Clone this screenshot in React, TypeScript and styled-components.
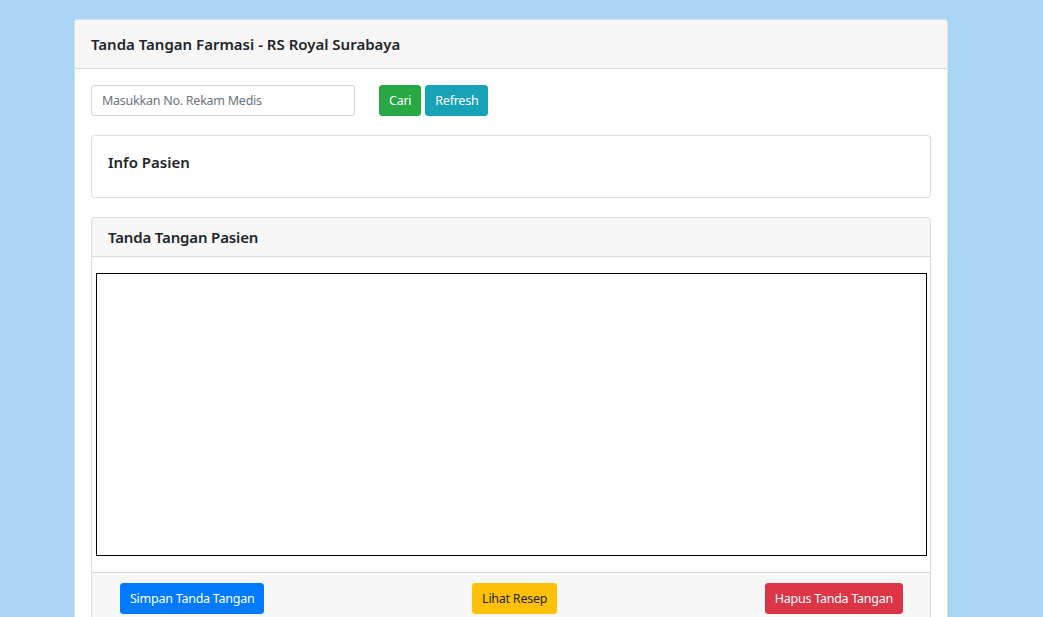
import React from "react";
import styled, { createGlobalStyle } from "styled-components";

const Global = createGlobalStyle`
  html, body { margin: 0; padding: 0; }
  body {
    background: #a8d5f3;
    font-family: "Noto Sans", "Open Sans", sans-serif;
    color: #212529;
  }
  * { box-sizing: border-box; }
`;

const Page = styled.div`
  padding: 19px 0 0 74px;
  min-height: 617px;
`;

const Card = styled.div<{ $mb?: number }>`
  background: #fff;
  border: 1px solid rgba(0, 0, 0, 0.125);
  border-radius: 4px;
  margin-bottom: ${(p) => p.$mb ?? 0}px;
  overflow: hidden;
`;

const MainCard = styled(Card)`
  width: 874px;
  border-bottom: none;
  border-bottom-left-radius: 0;
  border-bottom-right-radius: 0;
`;

const CardHeader = styled.div<{ $py: number }>`
  background: #f7f7f7;
  border-bottom: 1px solid rgba(0, 0, 0, 0.125);
  padding: ${(p) => p.$py}px 16px;
`;

const Title = styled.h5<{ $size: number; $ls?: number }>`
  margin: 0;
  font-size: ${(p) => p.$size}px;
  letter-spacing: ${(p) => p.$ls ?? 0}px;
  line-height: 24px;
  font-weight: 600;
`;

const CardBody = styled.div`
  padding: 16px;
`;

const SearchRow = styled.div`
  display: flex;
  align-items: center;
  gap: 4px;
  margin-bottom: 19px;
`;

const Input = styled.input`
  width: 264px;
  height: 31px;
  padding: 4px 10px;
  font-family: inherit;
  font-size: 12.5px;
  letter-spacing: -0.25px;
  color: #495057;
  border: 1px solid #ced4da;
  border-radius: 3px;
  margin-right: 20px;
  &::placeholder { color: #6c757d; }
`;

const Btn = styled.button<{ $bg: string; $fg?: string }>`
  height: 31px;
  padding: 0 9px;
  font-family: inherit;
  font-size: 12.5px;
  letter-spacing: -0.25px;
  line-height: 29px;
  color: ${(p) => p.$fg ?? "#fff"};
  background: ${(p) => p.$bg};
  border: 1px solid ${(p) => p.$bg};
  border-radius: 3px;
  cursor: pointer;
`;

const InfoBody = styled.div`
  padding: 16px 16px 25px;
`;

const InfoTitle = styled.h5`
  margin: 0;
  font-size: 15px;
  line-height: 20px;
  font-weight: 600;
`;

const CanvasBody = styled.div`
  padding: 16px 3px 16px 4px;
`;

const SignCanvas = styled.div`
  height: 283px;
  border: 1px solid #000;
  background: #fff;
`;

const Footer = styled.div`
  background: #f7f7f7;
  border-top: 1px solid rgba(0, 0, 0, 0.125);
  padding: 10px 27px 10px 28px;
  display: flex;
  justify-content: space-between;
`;

export default function App() {
  return (
    <>
      <Global />
      <Page>
        <MainCard>
          <CardHeader $py={12}>
            <Title $size={15}>Tanda Tangan Farmasi - RS Royal Surabaya</Title>
          </CardHeader>
          <CardBody>
            <SearchRow>
              <Input placeholder="Masukkan No. Rekam Medis" />
              <Btn $bg="#28a745">Cari</Btn>
              <Btn $bg="#17a2b8">Refresh</Btn>
            </SearchRow>
            <Card $mb={19}>
              <InfoBody>
                <InfoTitle>Info Pasien</InfoTitle>
              </InfoBody>
            </Card>
            <Card>
              <CardHeader $py={7}>
                <Title $size={15} $ls={-0.15}>Tanda Tangan Pasien</Title>
              </CardHeader>
              <CanvasBody>
                <SignCanvas />
              </CanvasBody>
              <Footer>
                <Btn $bg="#007bff">Simpan Tanda Tangan</Btn>
                <Btn $bg="#ffc107" $fg="#212529">Lihat Resep</Btn>
                <Btn $bg="#dc3545">Hapus Tanda Tangan</Btn>
              </Footer>
            </Card>
          </CardBody>
        </MainCard>
      </Page>
    </>
  );
}
